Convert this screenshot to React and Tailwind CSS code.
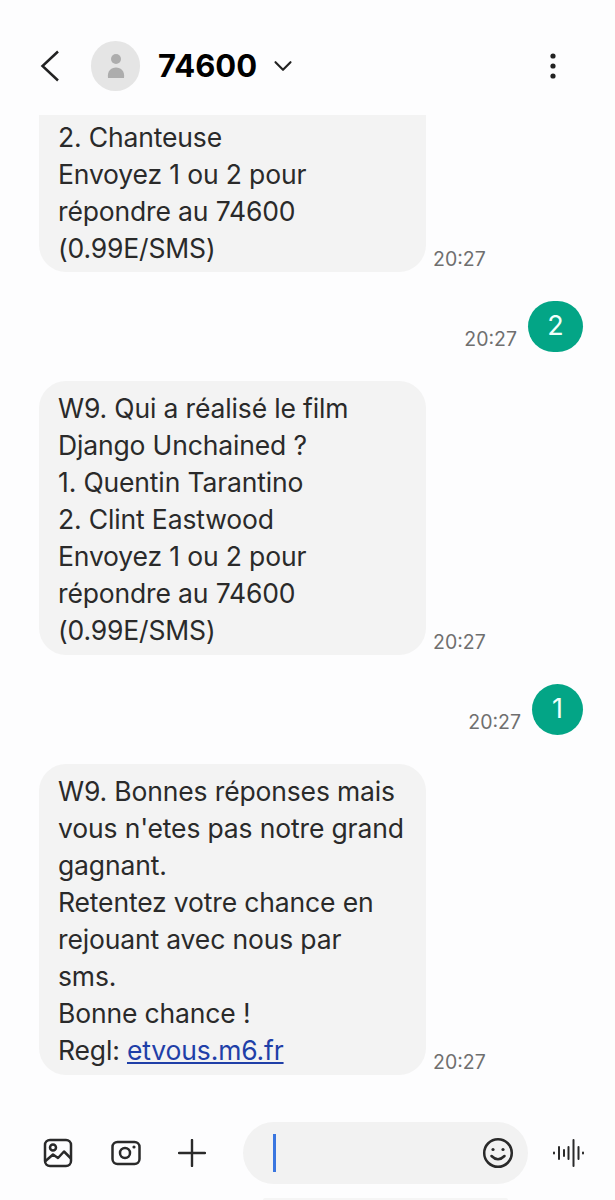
import { ChevronDown } from "lucide-react";

const TIME = "20:27";

const Received = ({ lines, clipped }) => (
    <div className="flex items-end">
        <div
            className={`w-[387px] shrink-0 bg-[#f3f3f3] pl-[19px] pr-2 text-[26.5px] leading-[37px] tracking-[-0.15px] text-[#2a2a2a] ${
                clipped ? "rounded-b-[27px] pt-[4px] pb-[5px]" : "rounded-[27px] pt-[9px] pb-[6px]"
            }`}
        >
            {lines}
        </div>
        <span className="ml-[7px] text-[19.5px] leading-[26px] text-[#6f6f6f]">{TIME}</span>
    </div>
);

const Sent = ({ value, width }) => (
    <div className="flex items-end justify-end pr-[32px]">
        <span className="mr-[11px] text-[19.5px] leading-[26px] text-[#6f6f6f]">{TIME}</span>
        <div
            className={`flex h-[51px] ${width} items-center justify-center rounded-full bg-[#03a586] text-[27px] text-[#f2fffb]`}
        >
            {value}
        </div>
    </div>
);

const ImageIcon = () => (
    <svg width="30" height="30" viewBox="0 0 30 30" fill="none" stroke="#2a2a2a" strokeWidth="2.5" strokeLinejoin="round" strokeLinecap="round">
        <rect x="2" y="2" width="26" height="26" rx="5" />
        <circle cx="10" cy="9.5" r="3" />
        <path d="M2.5 23 L10 16.5 L15 20 L21 13.5 L27.5 20" />
    </svg>
);

const CameraIcon = () => (
    <svg width="32" height="26" viewBox="0 0 32 26" fill="none" stroke="#2a2a2a" strokeWidth="2.5">
        <rect x="2.5" y="2" width="27" height="22" rx="5" />
        <circle cx="15" cy="13" r="5" />
        <circle cx="24" cy="7" r="1.6" fill="#2a2a2a" stroke="none" />
    </svg>
);

const PlusIcon = () => (
    <svg width="28" height="28" viewBox="0 0 28 28" fill="none" stroke="#2a2a2a" strokeWidth="2.4" strokeLinecap="round">
        <path d="M14 1v26M1 14h26" />
    </svg>
);

const SmileIcon = () => (
    <svg width="32" height="32" viewBox="0 0 32 32" fill="none" stroke="#2a2a2a" strokeWidth="2.5" strokeLinecap="round">
        <circle cx="16" cy="16" r="13.8" />
        <circle cx="11" cy="12.5" r="1.6" fill="#2a2a2a" stroke="none" />
        <circle cx="21" cy="12.5" r="1.6" fill="#2a2a2a" stroke="none" />
        <path d="M9.5 19 Q16 25.5 22.5 19" />
    </svg>
);

const VoiceIcon = () => (
    <svg width="34" height="30" viewBox="0 0 34 30" fill="none" stroke="#2a2a2a" strokeWidth="2" strokeLinecap="round">
        <path d="M3 14.5v1M8 9v12M13 12v6M17.5 9v12M22.5 2v26M27.5 9v12M32 14.5v1" />
    </svg>
);

const App = () => {
    return (
        <div className="flex h-[1200px] w-[615px] flex-col overflow-hidden bg-[#fdfdfe] font-['Inter',sans-serif]">
            {/* Top bar */}
            <header className="flex h-[115px] shrink-0 items-center pt-[16px] pl-[40px] pr-[58px]">
                <svg width="20" height="32" viewBox="0 0 20 32" fill="none" stroke="#222" strokeWidth="2.5">
                    <path d="M18 1.5 L2.5 16 L18 30.5" />
                </svg>
                <div className="ml-[31px] flex h-[50px] w-[49px] items-center justify-center rounded-full bg-[#e5e5e5]">
                    <svg width="18" height="26" viewBox="0 0 18 26" fill="#adadad">
                        <circle cx="9" cy="6" r="5" />
                        <path d="M1 25 C0 18 4 14.5 9 14.5 C14 14.5 18 18 17 25 Z" />
                    </svg>
                </div>
                <span className="ml-[18px] text-[31px] font-bold leading-none text-black">74600</span>
                <ChevronDown size={30} strokeWidth={1.7} className="ml-[11px] text-[#222]" />
                <svg className="ml-auto" width="8" height="28" viewBox="0 0 8 28" fill="#222">
                    <circle cx="4" cy="4" r="2.6" />
                    <circle cx="4" cy="14" r="2.6" />
                    <circle cx="4" cy="24" r="2.6" />
                </svg>
            </header>

            {/* Conversation */}
            <main className="flex flex-col gap-[29px] pl-[39px]">
                <Received
                    clipped
                    lines={
                        <>
                            2. Chanteuse
                            <br />
                            Envoyez 1 ou 2 pour
                            <br />
                            répondre au 74600
                            <br />
                            (0.99E/SMS)
                        </>
                    }
                />
                <Sent value="2" width="w-[55px]" />
                <Received
                    lines={
                        <>
                            W9. Qui a réalisé le film
                            <br />
                            Django Unchained ?
                            <br />
                            1. Quentin Tarantino
                            <br />
                            2. Clint Eastwood
                            <br />
                            Envoyez 1 ou 2 pour
                            <br />
                            répondre au 74600
                            <br />
                            (0.99E/SMS)
                        </>
                    }
                />
                <Sent value="1" width="w-[51px]" />
                <Received
                    lines={
                        <>
                            W9. Bonnes réponses mais
                            <br />
                            vous n'etes pas notre grand
                            <br />
                            gagnant.
                            <br />
                            Retentez votre chance en
                            <br />
                            rejouant avec nous par
                            <br />
                            sms.
                            <br />
                            Bonne chance !
                            <br />
                            Regl: <span className="text-[#1f3fa8] underline">etvous.m6.fr</span>
                        </>
                    }
                />
            </main>

            {/* Composer */}
            <footer className="mt-[47px] flex h-[62px] shrink-0 items-center pl-[43px]">
                <ImageIcon />
                <div className="ml-[37px]">
                    <CameraIcon />
                </div>
                <div className="ml-[36px]">
                    <PlusIcon />
                </div>
                <div className="ml-[37px] flex h-[62px] w-[285px] items-center justify-between rounded-full bg-[#f2f2f2] pl-[30px] pr-[14px]">
                    <div className="h-[38px] w-[3px] bg-[#3a76e0]" />
                    <SmileIcon />
                </div>
                <div className="ml-[23px]">
                    <VoiceIcon />
                </div>
            </footer>
            <div className="ml-[263px] mt-[14px] h-[10px] w-[245px] rounded-t-full bg-[#f5f5f5]" />
        </div>
    );
};

export default App;
